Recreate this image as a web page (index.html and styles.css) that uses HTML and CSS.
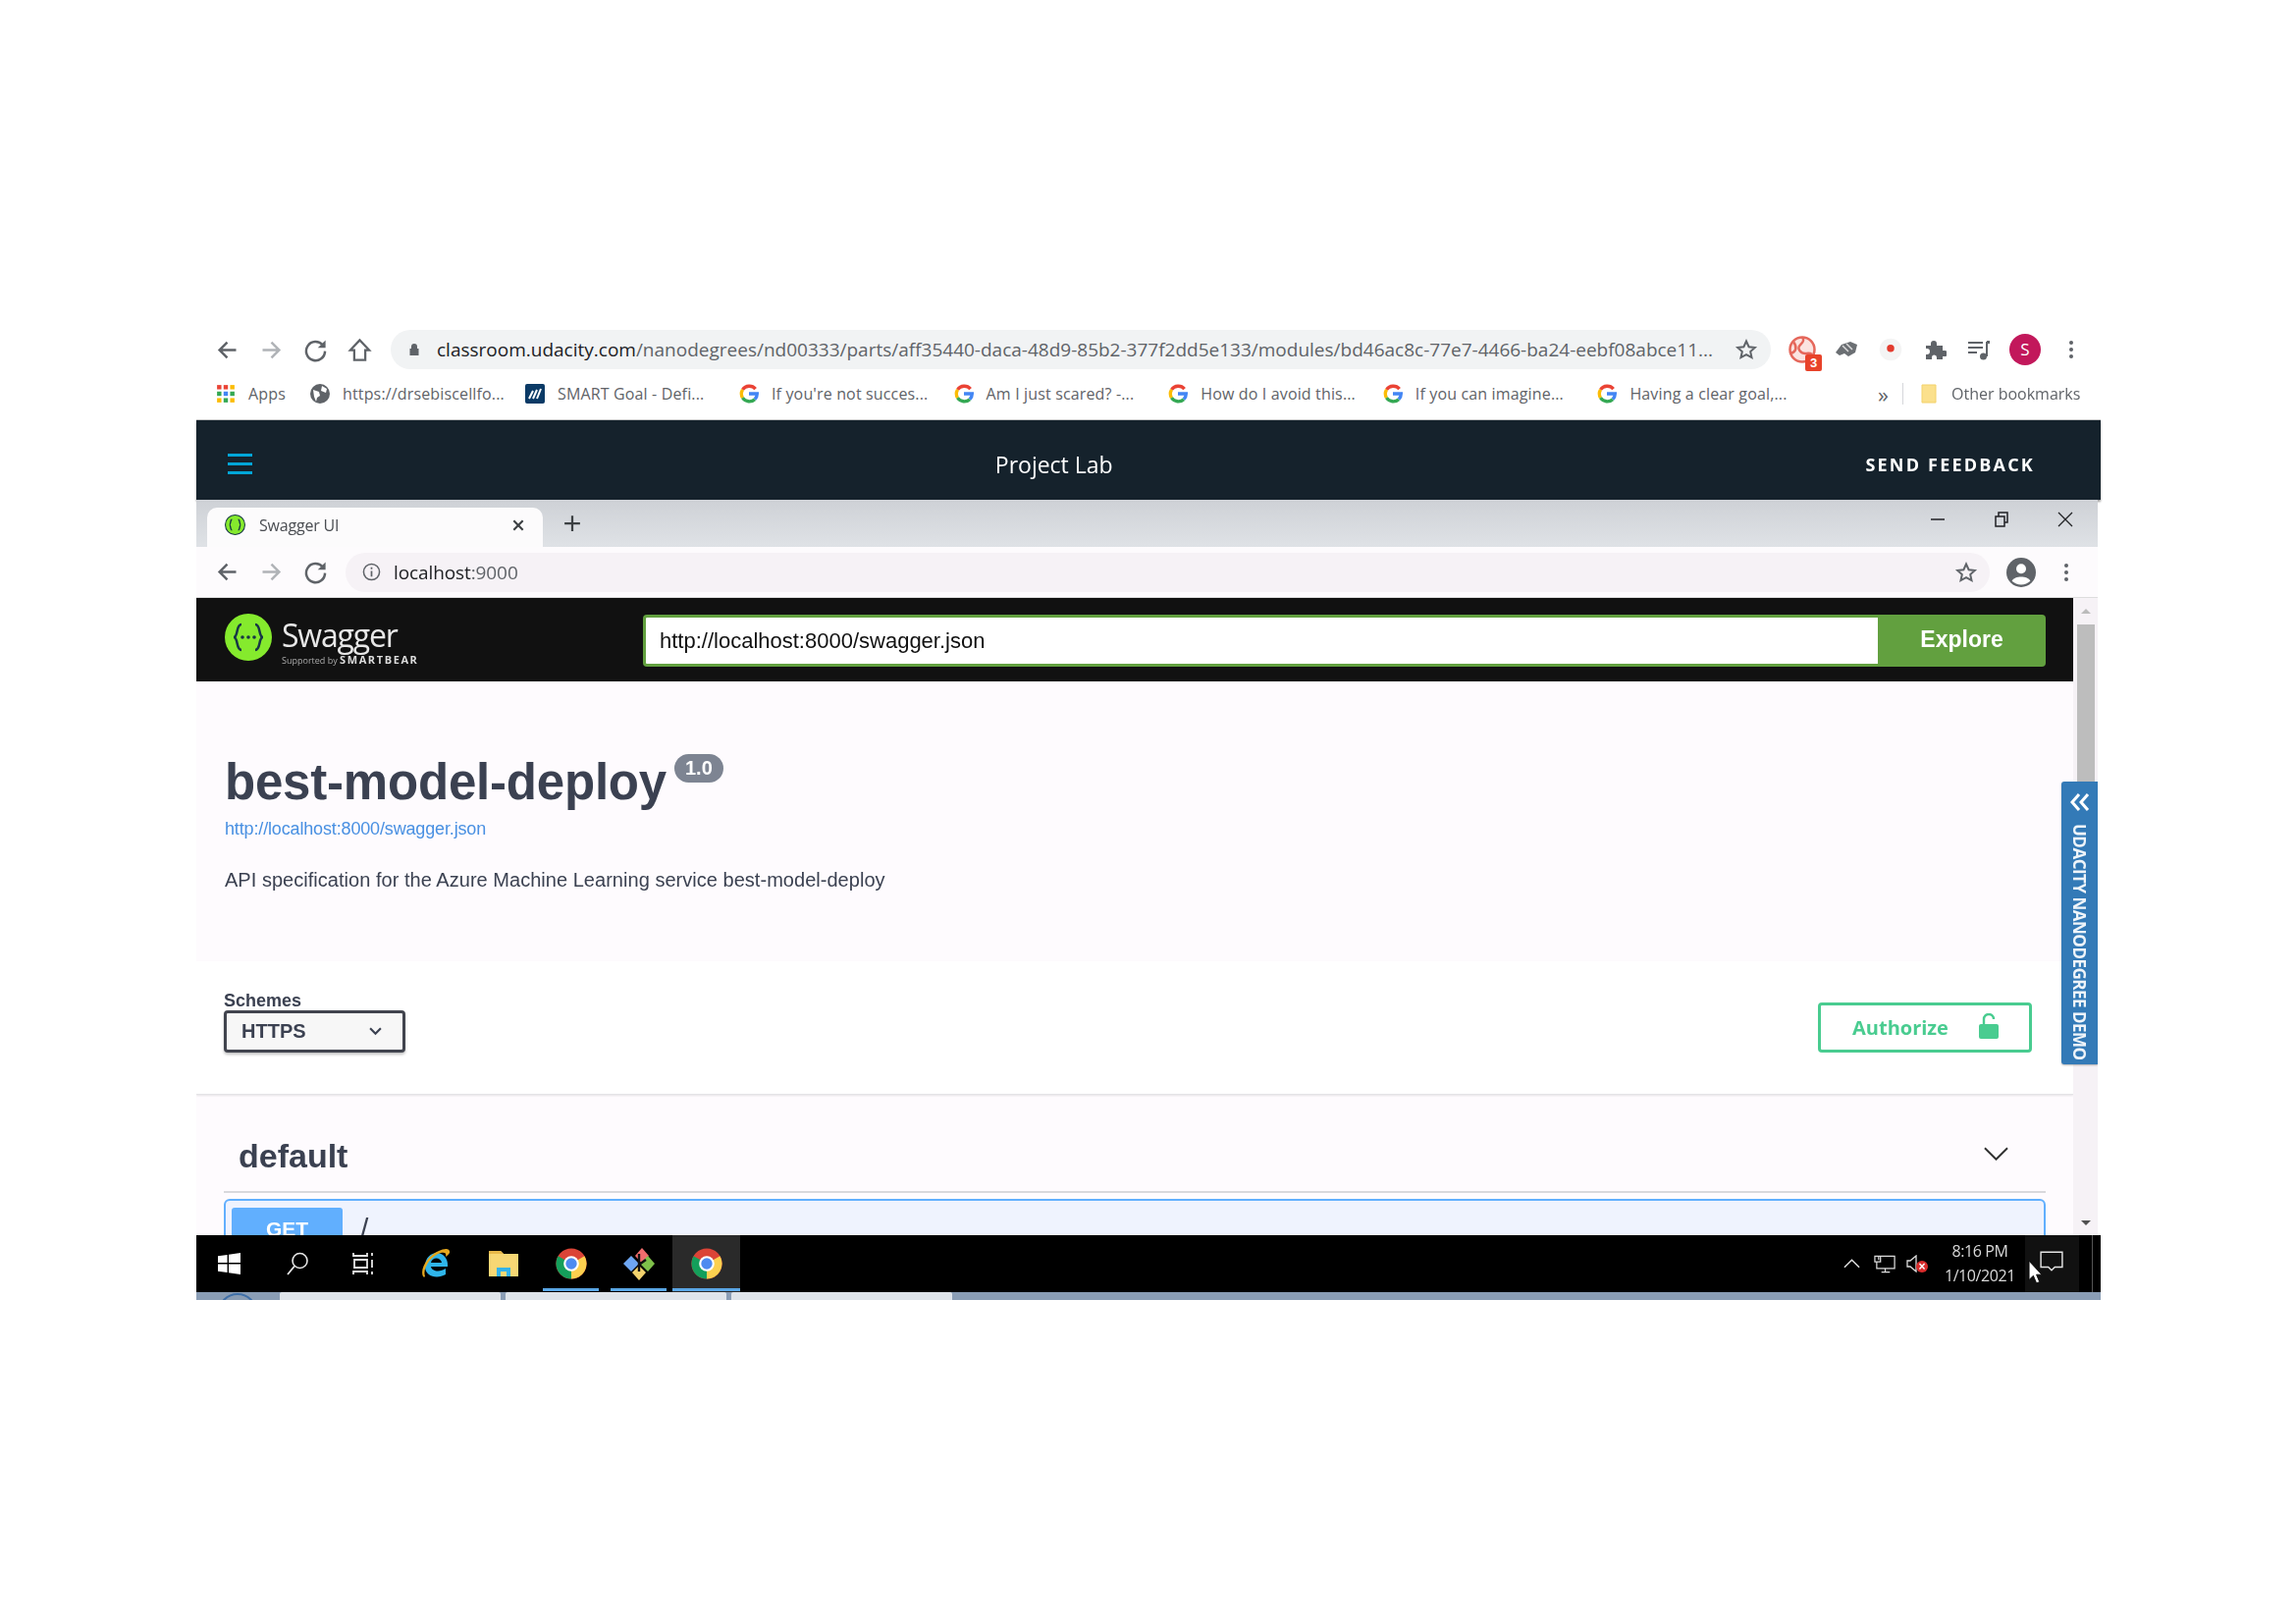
FILE: index.html
```html
<!doctype html>
<html>
	<head>
		<meta charset="utf-8" />
		<title>Project Lab - Swagger UI</title>
		<link rel="stylesheet" href="styles.css">
	</head>
	<body>
		<svg class="defs" aria-hidden="true">
			<symbol id="back" viewBox="0 0 24 24"><path d="M20 12H5M12 5l-7 7 7 7" fill="none" stroke="currentColor" stroke-width="2.2"/></symbol>
			<symbol id="forward" viewBox="0 0 24 24"><path d="M4 12h15M12 5l7 7-7 7" fill="none" stroke="currentColor" stroke-width="2.2"/></symbol>
			<symbol id="reload" viewBox="0 0 24 24"><path d="M18.5 7.5A8.5 8.5 0 1 0 20.5 13" fill="none" stroke="currentColor" stroke-width="2.2"/><path d="M21 3v7h-7z" fill="currentColor"/></symbol>
			<symbol id="star" viewBox="0 0 24 24"><path d="M12 3.5l2.6 5.7 6.2.7-4.6 4.2 1.3 6.1L12 17.2l-5.5 3 1.3-6.1-4.6-4.2 6.2-.7z" fill="none" stroke="currentColor" stroke-width="2"/></symbol>
			<symbol id="dots" viewBox="0 0 24 24"><circle cx="12" cy="5" r="2" fill="currentColor"/><circle cx="12" cy="12" r="2" fill="currentColor"/><circle cx="12" cy="19" r="2" fill="currentColor"/></symbol>
			<symbol id="google" viewBox="0 0 24 24">
				<path d="M20 6.2A10 10 0 0 0 4.2 7" fill="none" stroke="#ea4335" stroke-width="4"/>
				<path d="M4.2 7a10 10 0 0 0 0 10" fill="none" stroke="#fbbc05" stroke-width="4"/>
				<path d="M4.2 17a10 10 0 0 0 15 1.800" fill="none" stroke="#34a853" stroke-width="4"/>
				<path d="M19.200 18.800A10 10 0 0 0 22 12H12" fill="none" stroke="#4285f4" stroke-width="4"/>
			</symbol>
			<symbol id="chrome" viewBox="0 0 48 48">
				<circle cx="24" cy="24" r="22" fill="#db4437"/>
				<path d="M24 24 43 13a22 22 0 0 1-19 33z" fill="#fcd04f"/>
				<path d="M24 24 24 46A22 22 0 0 1 5 13z" fill="#149f5b"/>
				<circle cx="24" cy="24" r="11" fill="#fff"/>
				<circle cx="24" cy="24" r="8" fill="#4d8bf0"/>
			</symbol>
		</svg>

		<div class="shot">
			<div class="outer-bar">
				<div class="nav-row">
					<svg class="nav-icon"><use href="#back"/></svg>
					<svg class="nav-icon muted"><use href="#forward"/></svg>
					<svg class="nav-icon"><use href="#reload"/></svg>
					<svg class="nav-icon" viewBox="0 0 24 24"><path d="M12 3 3.500 12H7v9h10v-9h3.500z" fill="none" stroke="currentColor" stroke-width="2"/></svg>
					<div class="omnibox">
						<svg class="lock" viewBox="0 0 16 16"><path d="M5 7V5a3 3 0 0 1 6 0v2h1.500v7h-9V7z" fill="#5f6368"/></svg>
						<span class="url"><b>classroom.udacity.com</b>/nanodegrees/nd00333/parts/aff35440-daca-48d9-85b2-377f2dd5e133/modules/bd46ac8c-77e7-4466-ba24-eebf08abce11...</span>
						<svg class="omni-star"><use href="#star"/></svg>
					</div>
					<div class="extensions">
						<span class="ext ext-red">
							<svg viewBox="0 0 24 24"><circle cx="12" cy="12" r="10" fill="#fbe3e0" stroke="#e5675b" stroke-width="2"/><path d="M12 2c4 5-6 6-2 11s6 0 10 3M5 6c3 4 2 8-2 9" fill="none" stroke="#e5675b" stroke-width="2"/></svg>
							<i class="ext-badge">3</i>
						</span>
						<span class="ext ext-small">
							<svg viewBox="0 0 24 24"><path d="M1 15 7 7l9-3 7 3-2 8-7 4-4-3-5 2z" fill="#6b6f73"/><path d="M8 8l6 6M12 6l6 6" stroke="#d8d8d8" stroke-width="1.500"/></svg>
						</span>
						<span class="ext">
							<svg viewBox="0 0 24 24"><circle cx="12" cy="12" r="9" fill="#f4f4f4"/><circle cx="12" cy="11" r="3" fill="#e33b2e"/></svg>
						</span>
						<span class="ext ext-small">
							<svg viewBox="0 0 24 24"><path d="M3 8h5V6a3 3 0 0 1 6 0v2h6v5h2a3 3 0 0 1 0 6h-2v3h-6v-2a2.500 2.500 0 0 0-5 0v2H3v-5h1a3 3 0 0 0 0-6H3z" fill="#5f6368"/></svg>
						</span>
						<span class="ext ext-small">
							<svg viewBox="0 0 24 24"><path d="M1 5h15M1 10h15M1 15h9" stroke="#5f6368" stroke-width="2"/><path d="M20 4v15" stroke="#5f6368" stroke-width="2"/><path d="M20 3h3v3h-3z" fill="#5f6368"/><circle cx="16.500" cy="19" r="3.500" fill="#5f6368"/></svg>
						</span>
						<span class="avatar">S</span>
						<svg class="nav-dots"><use href="#dots"/></svg>
					</div>
				</div>
				<div class="bookmarks">
					<a class="bm bm-apps">
						<svg class="bm-icon" viewBox="0 0 18 18">
							<path d="M1 1h4v4H1z" fill="#ea4335"/><path d="M7 1h4v4H7z" fill="#ea4335"/><path d="M13 1h4v4h-4z" fill="#fbbc05"/>
							<path d="M1 7h4v4H1z" fill="#34a853"/><path d="M7 7h4v4H7z" fill="#4285f4"/><path d="M13 7h4v4h-4z" fill="#34a853"/>
							<path d="M1 13h4v4H1z" fill="#fbbc05"/><path d="M7 13h4v4H7z" fill="#34a853"/><path d="M13 13h4v4h-4z" fill="#fbbc05"/>
						</svg>
						Apps
					</a>
					<a class="bm bm-globe">
						<svg class="bm-icon" viewBox="0 0 20 20"><circle cx="10" cy="10" r="10" fill="#5f6368"/><path d="M3 6l6 2 1 4-3 2-1 4-2-5zM12 2l5 3-1 4-5-2z" fill="#fff"/></svg>
						https://drsebiscellfo...
					</a>
					<a class="bm bm-smart">
						<svg class="bm-icon" viewBox="0 0 20 20"><rect width="20" height="20" rx="2" fill="#0b3a66"/><path d="M4 15 8 7M8 15l4-9M12 15l4-10" stroke="#fff" stroke-width="2"/></svg>
						SMART Goal - Defi...
					</a>
					<a class="bm bm-g"><svg class="bm-icon"><use href="#google"/></svg>If you're not succes...</a>
					<a class="bm bm-g"><svg class="bm-icon"><use href="#google"/></svg>Am I just scared? -...</a>
					<a class="bm bm-g"><svg class="bm-icon"><use href="#google"/></svg>How do I avoid this...</a>
					<a class="bm bm-g"><svg class="bm-icon"><use href="#google"/></svg>If you can imagine...</a>
					<a class="bm bm-g"><svg class="bm-icon"><use href="#google"/></svg>Having a clear goal,...</a>
					<span class="bm-more">»</span>
					<span class="bm-sep"></span>
					<a class="bm bm-other">
						<svg class="bm-icon" viewBox="0 0 16 20"><path d="M1 1h14v18H1z" fill="#fbe08c" stroke="#f3d26a"/></svg>
						Other bookmarks
					</a>
				</div>
			</div>

			<div class="lab-bar">
				<span class="hamburger"><i></i><i></i><i></i></span>
				<span class="lab-title">Project Lab</span>
				<span class="lab-feedback">SEND FEEDBACK</span>
			</div>

			<div class="tabstrip">
				<div class="tab">
					<svg class="tab-favicon" viewBox="0 0 20 20"><circle cx="10" cy="10" r="9.500" fill="#85ea2d" stroke="#173646"/><path d="M7 5C5 5 6 10 4.500 10 6 10 5 15 7 15M13 5c2 0 1 5 2.500 5-1.500 0-.5 5-2.500 5" fill="none" stroke="#173646" stroke-width="1.300"/></svg>
					<span class="tab-title">Swagger UI</span>
					<svg class="tab-close" viewBox="0 0 12 12"><path d="M2 2l8 8M10 2l-8 8" stroke="#3c4043" stroke-width="1.800"/></svg>
				</div>
				<svg class="tab-new" viewBox="0 0 16 16"><path d="M8 1v14M1 8h14" stroke="#3c4043" stroke-width="2"/></svg>
				<div class="win-buttons">
					<svg viewBox="0 0 16 16"><path d="M1 8h14" stroke="#202124" stroke-width="1.500"/></svg>
					<svg viewBox="0 0 16 16"><path d="M2 5h9v10H2zM5 5V1h9v10h-3" fill="none" stroke="#202124" stroke-width="1.500"/></svg>
					<svg viewBox="0 0 16 16"><path d="M1 1l14 14M15 1 1 15" stroke="#202124" stroke-width="1.300"/></svg>
				</div>
			</div>

			<div class="inner-bar">
				<svg class="nav-icon"><use href="#back"/></svg>
				<svg class="nav-icon muted"><use href="#forward"/></svg>
				<svg class="nav-icon"><use href="#reload"/></svg>
				<div class="omnibox omnibox-inner">
					<svg class="info-icon" viewBox="0 0 20 20"><circle cx="10" cy="10" r="8.500" fill="none" stroke="#5f6368" stroke-width="1.600"/><path d="M10 9v6M10 5v2" stroke="#5f6368" stroke-width="1.800"/></svg>
					<span class="url"><b>localhost</b>:9000</span>
					<svg class="omni-star"><use href="#star"/></svg>
				</div>
				<svg class="account" viewBox="0 0 24 24"><circle cx="12" cy="12" r="12" fill="#5f6368"/><circle cx="12" cy="9" r="4" fill="#fff"/><path d="M4.500 19c2-4.500 13-4.500 15 0a11 11 0 0 1-15 0z" fill="#fff"/></svg>
				<svg class="nav-dots"><use href="#dots"/></svg>
			</div>

			<div class="viewport">
				<div class="page">
					<div class="swagger-top">
						<div class="sw-logo">
							<svg class="sw-mark" viewBox="0 0 48 48">
								<circle cx="24" cy="24" r="24" fill="#85ea2d"/>
								<path d="M17 11c-6 0-3 13-8 13 5 0 2 13 8 13M31 11c6 0 3 13 8 13-5 0-2 13-8 13" fill="none" stroke="#173646" stroke-width="2.500"/>
								<circle cx="18" cy="24" r="1.800" fill="#173646"/><circle cx="24" cy="24" r="1.800" fill="#173646"/><circle cx="30" cy="24" r="1.800" fill="#173646"/>
							</svg>
							<div class="sw-words">
								<span class="sw-name">Swagger</span>
								<span class="sw-by">Supported by <b>SMARTBEAR</b></span>
							</div>
						</div>
						<form class="sw-form">
							<span class="sw-input">http://localhost:8000/swagger.json</span>
							<span class="sw-explore">Explore</span>
						</form>
					</div>

					<div class="info">
						<h1 class="info-title">best-model-deploy <span class="version">1.0</span></h1>
						<a class="info-link">http://localhost:8000/swagger.json</a>
						<p class="info-desc">API specification for the Azure Machine Learning service best-model-deploy</p>
					</div>

					<div class="schemes">
						<div>
							<div class="schemes-label">Schemes</div>
							<div class="schemes-select">
								HTTPS
								<svg viewBox="0 0 12 8"><path d="M1 1l5 5 5-5" fill="none" stroke="#3b4151" stroke-width="2"/></svg>
							</div>
						</div>
						<div class="authorize">
							Authorize
							<svg viewBox="0 0 20 26"><path d="M2 11h16a2 2 0 0 1 2 2v11a2 2 0 0 1-2 2H2a2 2 0 0 1-2-2V13a2 2 0 0 1 2-2z" fill="#49cc90"/><path d="M5 11V6a5 5 0 0 1 10 0" fill="none" stroke="#49cc90" stroke-width="2.400"/></svg>
						</div>
					</div>

					<div class="ops">
						<div class="ops-head">
							<h2>default</h2>
							<svg viewBox="0 0 26 14"><path d="M1 1l12 12L25 1" fill="none" stroke="#303030" stroke-width="2"/></svg>
						</div>
						<div class="op">
							<span class="op-method">GET</span>
							<span class="op-path">/</span>
						</div>
					</div>
				</div>
				<div class="scrollbar">
					<i class="arrow-up"></i>
					<i class="thumb"></i>
					<i class="arrow-down"></i>
				</div>
				<div class="demo-tab">
					<svg viewBox="0 0 20 18"><path d="M9 1 2 9l7 8M18 1l-7 8 7 8" fill="none" stroke="#fff" stroke-width="3"/></svg>
					<span>UDACITY NANODEGREE DEMO</span>
				</div>
			</div>

			<div class="taskbar">
				<svg class="tb-win" viewBox="0 0 24 24"><path d="M0 4l10-1.500V11H0zM11.500 2.300 24 .5V11H11.500zM0 12.500h10v9L0 20zM11.500 12.500H24v11l-12.500-1.800z" fill="#fff"/></svg>
				<svg class="tb-search" viewBox="0 0 24 24"><circle cx="14.500" cy="9" r="7.500" fill="none" stroke="#e6e6e6" stroke-width="1.600"/><path d="M9 14.500 2 23" stroke="#e6e6e6" stroke-width="1.800"/></svg>
				<svg class="tb-tasks" viewBox="0 0 24 24"><path d="M2 1v3h14V1M3 8h13v8H3zM2 23v-3h14v3M21 1v3M21 8v8M21 20v3" fill="none" stroke="#e6e6e6" stroke-width="1.800"/></svg>
				<span class="tb-app">
					<svg viewBox="0 0 34 34">
						<path d="M6 20c0-9 6-14 12-14s11 5 11 12v2H12c1 5 9 6 15 2v6c-9 5-21 2-21-8zm6-4h11c-1-6-10-6-11 0z" fill="#2fb5ea"/>
						<path d="M4 30C0 22 10 8 20 4c6-3 12-3 11 2-1 2-3 3-4 4 1-4-1-5-5-4C12 9 3 22 6 30c-1 1-1 1-2 0z" fill="#e6a81e"/>
					</svg>
				</span>
				<span class="tb-app">
					<svg viewBox="0 0 34 34"><path d="M2 4h12l3 3h15v23H2z" fill="#f7d774"/><path d="M2 4h12l3 3H2z" fill="#e8b94a"/><path d="M10 30v-9h14v9h-4v-5h-6v5z" fill="#35b3e8"/></svg>
				</span>
				<span class="tb-app tb-running">
					<svg><use href="#chrome"/></svg>
				</span>
				<span class="tb-app tb-running tb-grouped">
					<svg viewBox="0 0 34 34">
						<path d="M17 1l7 8-7 8-7-8z" fill="#f26d6d" transform="translate(3 0)"/>
						<path d="M9 9l8 8-8 8-8-8z" fill="#6ea6f2"/>
						<path d="M26 9l7 8-7 8-8-8z" fill="#7fc04a"/>
						<path d="M17 19l7 7-7 8-7-8z" fill="#f2d26d"/>
						<path d="M17 7v18M17 18l7-5" stroke="#111" stroke-width="2.400"/>
					</svg>
				</span>
				<span class="tb-app tb-running tb-active">
					<svg><use href="#chrome"/></svg>
				</span>
				<div class="tray">
					<svg class="tray-up" viewBox="0 0 18 10"><path d="M1 9l8-8 8 8" fill="none" stroke="#ddd" stroke-width="1.600"/></svg>
					<svg class="tray-net" viewBox="0 0 24 20"><path d="M5 6V2h17v13H3V8M12 15v4M8 19h9M1 2h6v6H1z" fill="none" stroke="#ddd" stroke-width="1.300"/></svg>
					<span class="tray-sound">
						<svg viewBox="0 0 12 18"><path d="M1 6h3l6-5v16l-6-5H1z" fill="none" stroke="#ddd" stroke-width="1.300"/></svg>
						<i>×</i>
					</span>
					<div class="clock"><span>8:16 PM</span><span>1/10/2021</span></div>
					<div class="notify">
						<svg class="notify-icon" viewBox="0 0 22 20"><path d="M1 1h20v14H14l-3 3-3-3H1z" fill="none" stroke="#e6e6e6" stroke-width="1.300"/></svg>
						<svg class="cursor" viewBox="0 0 14 24"><path d="M1 1v18l4-4 3 7 3-1-3-7h5z" fill="#fff" stroke="#000" stroke-width=".8"/></svg>
					</div>
					<span class="desk-line"></span>
				</div>
			</div>

			<div class="winstrip">
				<i class="winstrip-start"></i>
				<i class="winstrip-item"></i>
				<i class="winstrip-item"></i>
				<i class="winstrip-item"></i>
			</div>
		</div>
	</body>
</html>
```

FILE: styles.css
```css
* {
	box-sizing: border-box;
}

html {
	--font-ui: "Open Sans", "Noto Sans", sans-serif;
	--font-page: "Liberation Sans", Arial, sans-serif;
	--color-icon: #5f6368;
	--color-text: #3b4151;
	--color-tint: #fefbfe;
}

body {
	margin: 0;
	padding: 320px 0 0 200px;
	background: #fff;
	font-family: var(--font-ui);
	color: #202124;
}

.defs {
	position: absolute;
	width: 0;
	height: 0;
}

.shot {
	width: 1940px;
	height: 1004px;
	display: flex;
	flex-direction: column;
	filter: blur(0.5px);
}

/* outer browser */

.outer-bar {
	height: 108px;
	flex: none;
	background: #fff;
}

.nav-row {
	height: 60px;
	display: flex;
	align-items: center;
	padding: 12px 0 0 18px;
}

.nav-icon {
	width: 27px;
	height: 27px;
	margin-right: 18px;
	color: var(--color-icon);
	flex: none;
}

.nav-icon.muted {
	color: #b0b3b7;
}

.omnibox {
	height: 40px;
	display: flex;
	align-items: center;
	border-radius: 20px;
	background: #f1f3f4;
}

.nav-row .omnibox {
	width: 1406px;
	padding: 0 13px 0 16px;
}

.lock {
	width: 16px;
	height: 16px;
	margin-right: 15px;
}

.url {
	flex: 1;
	font-size: 19px;
	color: #5f6368;
	white-space: nowrap;
}

.url b {
	font-weight: 400;
	color: #202124;
}

.omni-star {
	width: 24px;
	height: 24px;
	color: var(--color-icon);
}

.extensions {
	display: flex;
	align-items: center;
	margin-left: 17px;
}

.ext {
	position: relative;
	width: 30px;
	height: 30px;
	margin-right: 15px;
}

.ext svg {
	width: 30px;
	height: 30px;
	display: block;
}

.ext-small svg {
	width: 24px;
	height: 24px;
	margin: 3px;
}

.ext-badge {
	position: absolute;
	right: -5px;
	bottom: -7px;
	width: 17px;
	height: 17px;
	background: #e8432a;
	border-radius: 2px;
	color: #fff;
	font: 700 13px/17px var(--font-page);
	text-align: center;
}

.avatar {
	width: 32px;
	height: 32px;
	margin-left: 1px;
	border-radius: 50%;
	background: #c2185b;
	color: #fff;
	font-size: 17px;
	line-height: 32px;
	text-align: center;
}

.nav-dots {
	width: 24px;
	height: 24px;
	margin-left: 19px;
	color: var(--color-icon);
}

.bookmarks {
	height: 40px;
	display: flex;
	align-items: center;
	padding: 2px 0 0 20px;
	font-size: 16px;
	letter-spacing: 0.15px;
	color: #5f6368;
}

.bm {
	display: flex;
	align-items: center;
	flex: none;
	white-space: nowrap;
}

.bm-icon {
	width: 20px;
	height: 20px;
	margin-right: 13px;
	flex: none;
}

.bm-apps {
	width: 96px;
}

.bm-globe {
	width: 219px;
}

.bm-smart {
	width: 218px;
}

.bm-g {
	width: 218.6px;
}

.bm-more {
	margin-left: 67px;
	font-size: 22px;
	line-height: 1;
}

.bm-sep {
	width: 1px;
	height: 22px;
	margin: 0 14px 0 14px;
	background: #d5d7da;
}

.bm-other {
	margin-left: 2px;
	letter-spacing: 0;
}

/* classroom bar */

.lab-bar {
	height: 81px;
	flex: none;
	display: flex;
	align-items: center;
	justify-content: space-between;
	padding: 8px 67px 0 32px;
	background: #15222c;
	color: #fff;
	box-shadow: 0 -1px 0 #c8c8c8, 0 2px 2px #999;
}

.hamburger {
	width: 25px;
	display: flex;
	flex-direction: column;
	gap: 6px;
}

.hamburger i {
	height: 3px;
	background: #02a6d8;
}

.lab-title {
	margin-right: 10px;
	font-size: 23px;
	font-weight: 500;
}

.lab-feedback {
	font-size: 18px;
	font-weight: 700;
	letter-spacing: 2.2px;
}

/* inner browser */

.tabstrip {
	height: 48px;
	width: 1937px;
	flex: none;
	display: flex;
	align-items: flex-end;
	padding: 8px 0 0 11px;
	background: linear-gradient(#ced1d6, #dfe2e6);
}

.tab {
	width: 342px;
	height: 40px;
	display: flex;
	align-items: center;
	padding: 0 18px 5px 18px;
	border-radius: 10px 10px 0 0;
	background: #fcfbfc;
}

.tab-favicon {
	width: 21px;
	height: 21px;
	margin-right: 14px;
}

.tab-title {
	flex: 1;
	font-size: 16px;
	letter-spacing: -0.2px;
	color: #4a4d52;
}

.tab-close {
	width: 14px;
	height: 14px;
}

.tab-new {
	width: 18px;
	height: 18px;
	margin: 0 0 15px 21px;
}

.win-buttons {
	margin: 0 25px 0 auto;
	display: flex;
	align-self: flex-start;
	gap: 49px;
}

.win-buttons svg {
	width: 16px;
	height: 16px;
	margin-top: 4px;
}

.inner-bar {
	height: 52px;
	width: 1937px;
	flex: none;
	display: flex;
	align-items: center;
	padding: 0 0 0 18px;
	background: #fdfbfd;
	border-bottom: 1px solid #ddd;
}

.omnibox-inner {
	width: 1675px;
	margin-left: -1px;
	padding: 0 12px 0 17px;
	background: #f6f2f6;
}

.info-icon {
	width: 19px;
	height: 19px;
	margin-right: 13px;
}

.omnibox-inner .url {
	font-size: 19px;
	letter-spacing: -0.1px;
}

.account {
	width: 30px;
	height: 30px;
	margin-left: 17px;
}

.inner-bar .nav-dots {
	margin-left: 19px;
}

/* swagger page */

.viewport {
	position: relative;
	height: 649px;
	width: 1937px;
	flex: none;
	display: flex;
	overflow: hidden;
	background: var(--color-tint);
}

.page {
	width: 1912px;
	flex: none;
	font-family: var(--font-page);
	color: var(--color-text);
}

.swagger-top {
	height: 85px;
	display: flex;
	align-items: center;
	padding: 0 28px 0 29px;
	background: #111;
	color: #fff;
}

.sw-logo {
	width: 426px;
	flex: none;
	display: flex;
	align-items: center;
	margin-bottom: 5px;
	font-family: var(--font-ui);
}

.sw-mark {
	width: 48px;
	height: 48px;
	margin-right: 10px;
}

.sw-words {
	display: flex;
	flex-direction: column;
	padding-top: 9px;
}

.sw-name {
	font-size: 32px;
	line-height: 38px;
	letter-spacing: -1.2px;
	color: #e8e8e8;
}

.sw-by {
	font-size: 9px;
	line-height: 12px;
	color: #aaa;
}

.sw-by b {
	font-size: 11px;
	letter-spacing: 1.6px;
	color: #ddd;
}

.sw-form {
	flex: 1;
	height: 53px;
	margin-top: 2px;
	display: flex;
}

.sw-input {
	flex: 1;
	padding: 0 14px;
	border: 3px solid #62a03f;
	border-right: none;
	border-radius: 4px 0 0 4px;
	background: #fff;
	color: #111;
	font-size: 22px;
	line-height: 47px;
}

.sw-explore {
	width: 171px;
	background: #62a03f;
	border-radius: 0 4px 4px 0;
	color: #fff;
	font-size: 23px;
	font-weight: 700;
	line-height: 51px;
	text-align: center;
}

.info {
	height: 285px;
	padding: 71px 0 0 29px;
}

.info-title {
	display: flex;
	align-items: flex-start;
	margin: 0;
	font-size: 51px;
	line-height: 64px;
	letter-spacing: -0.2px;
	font-weight: 700;
}

.version {
	margin: 3px 0 0 8px;
	padding: 0 11px;
	border-radius: 15px;
	background: #7d8492;
	color: #fff;
	font-size: 20px;
	line-height: 29px;
	letter-spacing: 0;
}

.info-link {
	display: block;
	margin-top: 4px;
	font-size: 18px;
	line-height: 22px;
	letter-spacing: -0.15px;
	color: #4990e2;
}

.info-desc {
	margin: 29px 0 0;
	font-size: 20px;
	line-height: 24px;
	letter-spacing: 0.03px;
	color: #3b4151;
}

.schemes {
	height: 136px;
	display: flex;
	align-items: flex-start;
	justify-content: space-between;
	padding: 30px 42px 0 28px;
	background: #fff;
	border-bottom: 1px solid #e4e4e6;
	box-shadow: 0 1px 2px rgba(0, 0, 0, 0.1);
}

.schemes-label {
	font-size: 18px;
	font-weight: 700;
	line-height: 20px;
}

.schemes-select {
	width: 185px;
	height: 43px;
	display: flex;
	align-items: center;
	justify-content: space-between;
	padding: 0 21px 0 15px;
	border: 3px solid #41444e;
	border-radius: 4px;
	background: #f7f7f7;
	box-shadow: 0 2px 3px rgba(0, 0, 0, 0.25);
	font-size: 20px;
	font-weight: 700;
}

.schemes-select svg {
	width: 13px;
	height: 9px;
}

.authorize {
	width: 218px;
	height: 51px;
	margin-top: 12px;
	display: flex;
	align-items: center;
	padding-left: 32px;
	gap: 31px;
	border: 3px solid #49cc90;
	border-radius: 4px;
	color: #49cc90;
	font-family: var(--font-ui);
	font-size: 20px;
	font-weight: 700;
}

.authorize svg {
	width: 20px;
	height: 26px;
	margin-top: -3px;
}

.ops {
	padding: 0 28px;
}

.ops-head {
	height: 100px;
	display: flex;
	align-items: center;
	justify-content: space-between;
	padding: 26px 38px 0 15px;
	border-bottom: 2px solid #d8d8dc;
}

.ops-head h2 {
	margin: 0;
	font-size: 34px;
	font-weight: 700;
}

.ops-head svg {
	width: 25px;
	height: 14px;
	margin-top: -4px;
}

.op {
	height: 60px;
	margin-top: 6px;
	display: flex;
	padding: 7px 6px;
	border: 2px solid #61affe;
	border-radius: 6px;
	background: #eff3fe;
}

.op-method {
	width: 113px;
	height: 44px;
	border-radius: 3px;
	background: #61affe;
	color: #fff;
	font-size: 21px;
	font-weight: 700;
	line-height: 44px;
	text-align: center;
}

.op-path {
	margin-left: 18px;
	font-size: 30px;
	line-height: 44px;
}

.scrollbar {
	width: 25px;
	flex: none;
	display: flex;
	flex-direction: column;
	align-items: center;
	background: #f6f2f6;
}

.scrollbar i {
	display: block;
}

.arrow-up {
	margin-top: 11px;
	border: 5px solid transparent;
	border-top: none;
	border-bottom-color: #bbb;
}

.thumb {
	width: 18px;
	height: 166px;
	margin-top: 11px;
	background: #bdbdbd;
}

.arrow-down {
	margin-top: auto;
	margin-bottom: 10px;
	border: 5px solid transparent;
	border-bottom: none;
	border-top-color: #505050;
}

.demo-tab {
	position: absolute;
	right: 0;
	top: 187px;
	width: 37px;
	height: 288px;
	display: flex;
	flex-direction: column;
	align-items: center;
	padding-top: 12px;
	border-radius: 3px 0 0 3px;
	background: #337ab7;
	box-shadow: 0 1px 2px rgba(0, 0, 0, 0.3);
	color: #eef4f9;
	font-size: 17px;
	font-weight: 700;
	white-space: nowrap;
}

.demo-tab svg {
	width: 20px;
	height: 18px;
	margin-bottom: 13px;
}

.demo-tab span {
	writing-mode: vertical-rl;
	letter-spacing: -0.5px;
}

/* taskbar */

.taskbar {
	height: 58px;
	flex: none;
	display: flex;
	align-items: center;
	background: #000;
	padding-left: 22px;
}

.tb-win {
	width: 23px;
	height: 24px;
	margin-right: 46px;
}

.tb-search {
	width: 24px;
	height: 24px;
	margin-right: 43px;
}

.tb-tasks {
	width: 24px;
	height: 24px;
	margin-right: 27px;
}

.tb-app {
	width: 69px;
	height: 58px;
	display: flex;
	align-items: center;
	justify-content: center;
	position: relative;
}

.tb-app svg {
	width: 34px;
	height: 34px;
}

.tb-running::after {
	content: '';
	position: absolute;
	left: 6px;
	right: 6px;
	bottom: 1px;
	height: 3px;
	background: #5aa7e6;
}

.tb-active {
	background: #2a2a2a;
}

.tb-active::after {
	left: 0;
	right: 0;
}

.tray {
	margin-left: auto;
	height: 58px;
	display: flex;
	align-items: center;
}

.tray-up {
	width: 17px;
	height: 10px;
	margin-right: 14px;
}

.tray-net {
	width: 23px;
	height: 20px;
	margin-right: 10px;
}

.tray-sound {
	position: relative;
	width: 12px;
	height: 18px;
	margin-right: 26px;
}

.tray-sound svg {
	width: 12px;
	height: 18px;
	display: block;
}

.tray-sound i {
	position: absolute;
	left: 10px;
	top: 6px;
	width: 12px;
	height: 12px;
	border-radius: 50%;
	background: #d92c2c;
	color: #fff;
	font: 700 12px/12px var(--font-page);
	text-align: center;
}

.clock {
	width: 74px;
	display: flex;
	flex-direction: column;
	align-items: center;
	gap: 4px;
	font-size: 16px;
	line-height: 21px;
	letter-spacing: -0.4px;
	color: #d8d8d8;
}

.notify {
	position: relative;
	width: 55px;
	height: 58px;
	margin-left: 9px;
	display: flex;
	align-items: center;
	justify-content: flex-end;
	padding: 0 16px 4px 0;
	background: #111;
}

.notify-icon {
	width: 24px;
	height: 22px;
}

.cursor {
	position: absolute;
	left: 3px;
	top: 24px;
	width: 15px;
	height: 28px;
}

.desk-line {
	width: 1px;
	height: 58px;
	margin: 0 8px 0 13px;
	background: #555;
}

.winstrip {
	height: 8px;
	flex: none;
	display: flex;
	gap: 5px;
	background: #8a9db5;
	overflow: hidden;
}

.winstrip i {
	display: block;
}

.winstrip-start {
	width: 80px;
	position: relative;
}

.winstrip-start::after {
	content: '';
	position: absolute;
	left: 22px;
	top: 1px;
	width: 36px;
	height: 36px;
	border: 2px solid #3f6fa8;
	border-radius: 50%;
}

.winstrip-item {
	width: 225px;
	background: #dfe4ea;
	border-radius: 2px 2px 0 0;
}
```
